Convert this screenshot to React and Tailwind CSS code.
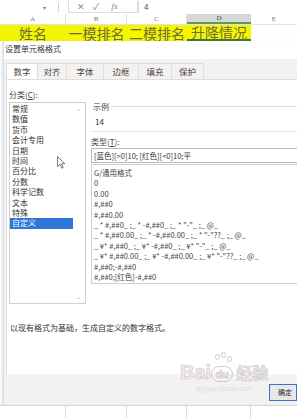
import React from "react";

const F = { fontFamily: '"Noto Sans CJK SC", "Noto Sans", sans-serif' };

const leftItems = ["常规", "数值", "货币", "会计专用", "日期", "时间", "百分比", "分数", "科学记数", "文本", "特殊", "自定义"];
const rightItems = [
  "G/通用格式",
  "0",
  "0.00",
  "#,##0",
  "#,##0.00",
  '_ * #,##0_ ;_ * -#,##0_ ;_ * "-"_ ;_ @_',
  '_ * #,##0.00_ ;_ * -#,##0.00_ ;_ * "-"??_ ;_ @_',
  '_ ¥* #,##0_ ;_ ¥* -#,##0_ ;_ ¥* "-"_ ;_ @_',
  '_ ¥* #,##0.00_ ;_ ¥* -#,##0.00_ ;_ ¥* "-"??_ ;_ @_',
  "#,##0;-#,##0",
  "#,##0;[红色]-#,##0",
];

export default function App() {
  return (
    <div className="w-[297px] h-[418px] overflow-hidden bg-white relative flex flex-col" style={F}>
      {/* formula bar */}
      <div className="h-[14px] flex items-center bg-white text-[#666]">
        <div className="w-[58px] flex justify-end pr-[12px] text-[6px] text-[#777]">▾</div>
        <div className="w-[1px] h-[9px] border-l border-dotted border-[#aaa]"></div>
        <div className="ml-[9px] w-[70px] h-[12px] border border-[#ddd] border-t-0 flex items-center text-[9px] text-[#888]">
          <span className="ml-[8px]">✕</span>
          <span className="ml-[8px]">✓</span>
          <span className="ml-[12px] italic text-[9px]" style={{ fontFamily: '"Liberation Serif", serif' }}>fx</span>
        </div>
        <div className="w-[1px] h-[12px] bg-[#ddd]"></div>
        <span className="ml-[5px] text-[8px] text-[#555]">4</span>
      </div>
      {/* column headers */}
      <div className="h-[11px] flex text-[7px] text-[#777] border-b border-[#e2e2e2]" style={{ fontFamily: '"Liberation Serif", serif' }}>
        <div className="w-[66px] flex items-center justify-center border-r border-[#e2e2e2]">A</div>
        <div className="w-[61px] flex items-center justify-center border-r border-[#e2e2e2]">B</div>
        <div className="w-[60px] flex items-center justify-center border-r border-[#e2e2e2]">C</div>
        <div className="w-[64px] flex items-center justify-center bg-[#d8d8d8] border-b-2 border-[#5a9a5a] text-[#444]">D</div>
        <div className="w-[46px] flex items-center justify-center">E</div>
      </div>
      {/* yellow row */}
      <div className="h-[16px] flex text-[14px] leading-[16px] text-[#6c6c3a]">
        <div className="w-[66px] bg-[#f5f500] flex items-center justify-center">姓名</div>
        <div className="w-[61px] bg-[#f5f500] flex items-center justify-center">一模排名</div>
        <div className="w-[60px] bg-[#f5f500] flex items-center justify-center">二模排名</div>
        <div className="w-[64px] bg-[#f5f500] flex items-center justify-center border-b-2 border-[#3c7a3c]">升降情况</div>
        <div className="w-[46px]"></div>
      </div>
      {/* dialog */}
      <div className="ml-[3px] h-[364px] bg-[#f4f1f1] border-l border-[#cfdde6] flex flex-col shadow-[0_2px_4px_rgba(0,0,0,0.2)]">
        <div className="h-[18px] pl-[1px] pt-[2px] text-[8px] leading-[12px] text-[#333] bg-white">设置单元格格式</div>
        <div className="h-[4px]"></div>
        <div className="h-[16px] flex text-[8.5px] text-[#444] pl-[2px]">
          <div className="w-[32px] bg-white border border-b-0 border-[#ddd] flex items-center justify-center">数字</div>
          <div className="w-[29px] border-r border-t border-[#e2dcdc] flex items-center justify-center">对齐</div>
          <div className="w-[37px] border-r border-t border-[#e2dcdc] flex items-center justify-center">字体</div>
          <div className="w-[35px] border-r border-t border-[#e2dcdc] flex items-center justify-center">边框</div>
          <div className="w-[33px] border-r border-t border-[#e2dcdc] flex items-center justify-center">填充</div>
          <div className="w-[32px] border-r border-t border-[#e2dcdc] flex items-center justify-center">保护</div>
        </div>
        <div className="ml-[2px] h-[295px] bg-white border-l border-t border-[#e0dcdc] flex flex-col pl-[2px]">
          <div className="mt-[10px] text-[8px] leading-[10px] text-[#444]">分类(<span className="underline">C</span>):</div>
          <div className="flex mt-[2px]">
            <div className="w-[77px] h-[202px] border border-[#cfcfcf] relative pt-[1px]">
              {leftItems.map((t, i) => (
                <div
                  key={t}
                  className={
                    "h-[10.4px] text-[8px] leading-[10.4px] pl-[2px] w-[63px] " +
                    (i === 11 ? "bg-[#2c77d8] text-white" : "text-[#333]")
                  }
                >
                  {t}
                </div>
              ))}
              <span className="absolute right-[4px] top-[4px] text-[6px] text-[#aaa]">⌃</span>
              <span className="absolute right-[4px] bottom-[2px] text-[6px] text-[#aaa]">⌄</span>
            </div>
            <div className="ml-[5px] flex-1 flex flex-col">
              <div className="flex items-center h-[9px]">
                <span className="text-[8px] text-[#444] pl-[2px]">示例</span>
                <div className="flex-1 ml-[2px] border-t border-[#ddd]"></div>
              </div>
              <div className="h-[21px] text-[8px] leading-[21px] text-[#333] pl-[4px] border-b border-[#e5e5e5]">14</div>
              <div className="mt-[5px] h-[9px] text-[8px] leading-[9px] text-[#444]">类型(<span className="underline">T</span>):</div>
              <div className="mt-[2px] h-[15px] border border-[#b8b8b8] border-r-0 text-[7.5px] leading-[13px] pl-[2px] text-[#333] whitespace-nowrap overflow-hidden">
                [蓝色][&gt;0]10;&nbsp;[红色][&lt;0]10;平
              </div>
              <div className="mt-[1px] h-[120px] border border-[#cfcfcf] border-r-0 pt-[3px] pl-[2px] overflow-hidden">
                {rightItems.map((t) => (
                  <div key={t} className="h-[10.4px] text-[7.5px] leading-[10.4px] text-[#444] whitespace-pre">{t}</div>
                ))}
              </div>
            </div>
          </div>
          <div className="mt-[19px] text-[8px] leading-[10px] text-[#333] pl-[1px]">以现有格式为基础，生成自定义的数字格式。</div>
        </div>
        <div className="flex-1 flex justify-end items-start pt-[10px]">
          <div className="w-[28px] h-[17px] border border-[#3c74c8] bg-[#e8e8e8] text-[7px] leading-[15px] pl-[8px] text-[#222] overflow-hidden whitespace-nowrap">确定</div>
        </div>
      </div>
      {/* bottom grid strip */}
      <div className="flex-1 flex border-t border-[#d4d4d4] bg-white">
        <div className="w-[66px] border-r border-[#ddd]"></div>
        <div className="w-[61px] border-r border-[#ddd]"></div>
        <div className="w-[60px] border-r border-[#ddd]"></div>
        <div className="w-[64px] border-r border-[#ddd]"></div>
      </div>
      {/* Baidu watermark */}
      <div className="absolute left-[180px] top-[362px] flex flex-col items-center pointer-events-none">
        <div className="flex items-end text-[20px] leading-[20px] font-bold text-[#f2eeee]" style={{ fontFamily: '"Liberation Sans", sans-serif', WebkitTextStroke: "0.7px #cfcaca" }}>
          <span>Bai</span>
          <span className="relative w-[22px] h-[20px] flex items-end justify-center">
            <span className="absolute top-[-8px] left-[4px] w-[5px] h-[6px] rounded-full border border-[#cfcaca]"></span>
            <span className="absolute top-[-10px] left-[10px] w-[5px] h-[6px] rounded-full border border-[#cfcaca]"></span>
            <span className="absolute top-[-6px] left-[16px] w-[5px] h-[6px] rounded-full border border-[#cfcaca]"></span>
            <span className="w-[22px] h-[16px] rounded-[8px] border border-[#cfcaca] text-[11px] leading-[14px] text-center">du</span>
          </span>
          <span className="ml-[3px] text-[16px]" style={F}>经验</span>
        </div>
        <div className="text-[7px] text-[#ddd] mt-[2px]" style={{ fontFamily: '"Liberation Sans", sans-serif' }}>jingyan.baidu.com</div>
      </div>
      {/* mouse cursor */}
      <svg className="absolute left-[57px] top-[156px]" width="9" height="13" viewBox="0 0 9 13">
        <path d="M0.5 0.5 L0.5 10.5 L3 8.2 L4.8 12.2 L6.2 11.6 L4.5 7.7 L7.8 7.7 Z" fill="white" stroke="#555" strokeWidth="0.8" />
      </svg>
    </div>
  );
}
